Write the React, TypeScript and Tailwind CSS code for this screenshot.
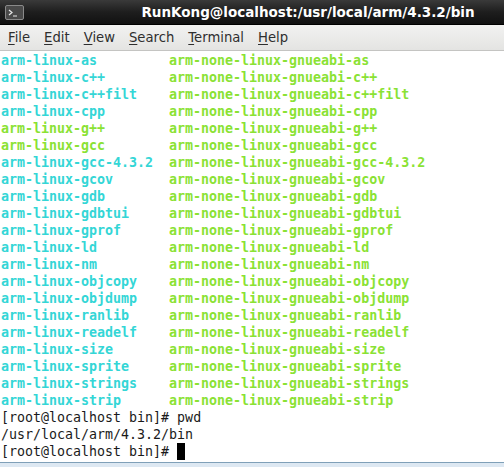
const names = [
  "as",
  "c++",
  "c++filt",
  "cpp",
  "g++",
  "gcc",
  "gcc-4.3.2",
  "gcov",
  "gdb",
  "gdbtui",
  "gprof",
  "ld",
  "nm",
  "objcopy",
  "objdump",
  "ranlib",
  "readelf",
  "size",
  "sprite",
  "strings",
  "strip",
];

// hard links show green, symlinks cyan
const green = new Set(["g++", "gcc"]);

const menu = [
  { key: "F", rest: "ile" },
  { key: "E", rest: "dit" },
  { key: "V", rest: "iew" },
  { key: "S", rest: "earch" },
  { key: "T", rest: "erminal" },
  { key: "H", rest: "elp" },
];

export default function App() {
  return (
    <div className="h-[467px] w-[504px] flex flex-col overflow-hidden bg-white">
      {/* Title bar */}
      <div className="h-[25px] flex items-center bg-gradient-to-b from-[#3a3a3a] via-[#1e1e1e] to-[#111] border-b border-[#000]">
        <div className="ml-[5px] w-[19px] h-[15px] rounded-[2px] bg-[#4a4a4a] border border-[#8a8a8a] flex items-start">
          <svg width="17" height="13" viewBox="0 0 17 13">
            <path d="M3 4 L6 6.5 L3 9" stroke="#e8e8e8" strokeWidth="1.2" fill="none" />
            <path d="M7 10 H11" stroke="#e8e8e8" strokeWidth="1" />
          </svg>
        </div>
        <div className="flex-1 text-center pl-[88px] text-white font-bold text-[13.5px] font-['DejaVu_Sans',sans-serif]">
          RunKong@localhost:/usr/local/arm/4.3.2/bin
        </div>
      </div>

      {/* Menu bar */}
      <div className="h-[26px] flex items-center gap-[14px] pl-[8px] bg-gradient-to-b from-[#f2f2f1] to-[#e4e4e2] border-b border-[#c4c4c2] text-[13.2px] text-[#2e2e2e] font-['DejaVu_Sans',sans-serif]">
        {menu.map((m) => (
          <span key={m.key}>
            <span className="underline underline-offset-2">{m.key}</span>
            {m.rest}
          </span>
        ))}
      </div>

      {/* Terminal */}
      <div className="flex-1 pt-[1px] pl-[1px] font-['DejaVu_Sans_Mono',monospace] text-[13.3px] leading-[17px] text-[#1a1a1a] whitespace-pre">
        {names.map((n) => (
          <div key={n} className="flex font-bold">
            <span
              className={`w-[168px] ${green.has(n) ? "text-[#8ae234]" : "text-[#34d6d6]"}`}
            >
              {"arm-linux-" + n}
            </span>
            <span className="text-[#8ae234]">{"arm-none-linux-gnueabi-" + n}</span>
          </div>
        ))}
        <div>[root@localhost bin]# pwd</div>
        <div>/usr/local/arm/4.3.2/bin</div>
        <div className="flex items-center">
          <span>[root@localhost bin]# </span>
          <span className="inline-block w-[8px] h-[17px] bg-black" />
        </div>
      </div>

      {/* Bottom edge */}
      <div className="h-[5px] border-t border-[#7fa0b8] bg-[#dde8f2]" />
    </div>
  );
}
